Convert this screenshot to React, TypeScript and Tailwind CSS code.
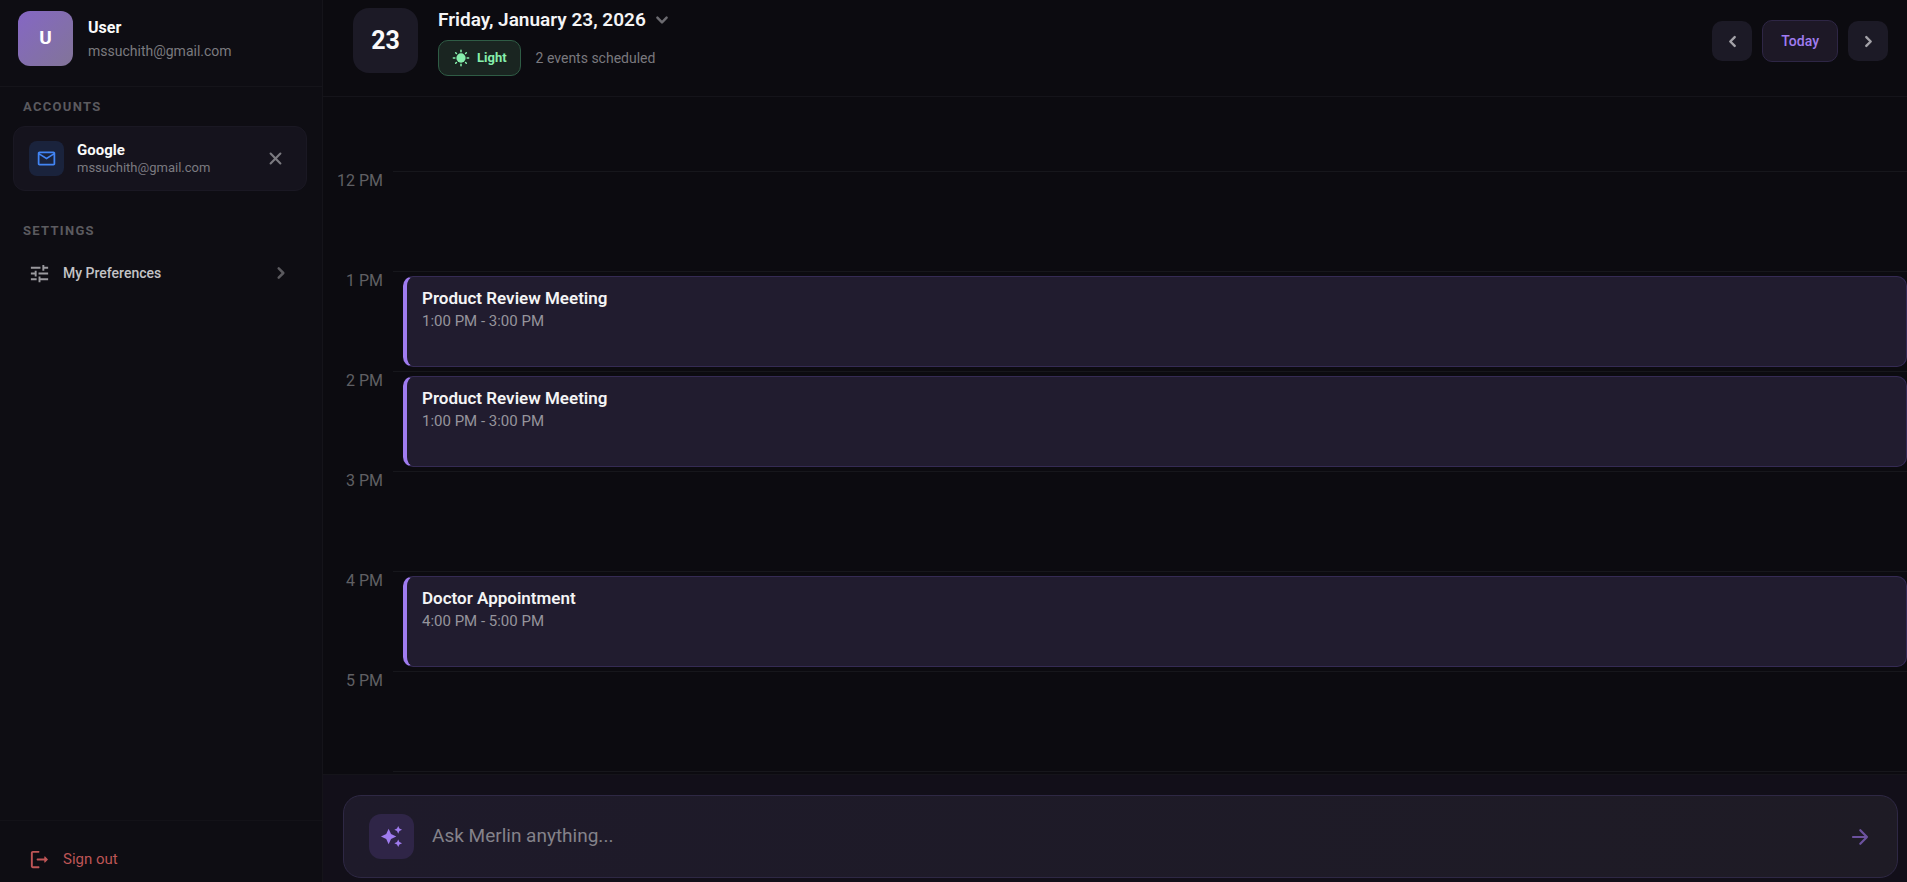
import React from 'react';
import { MdAutoAwesome, MdOutlineMail, MdTune } from 'react-icons/md';

interface CalendarEvent {
  title: string;
  time: string;
}

interface HourSlot {
  hour: number;
  label?: string;
  event?: CalendarEvent;
}

const review: CalendarEvent = { title: 'Product Review Meeting', time: '1:00 PM - 3:00 PM' };

const slots: HourSlot[] = [
  { hour: 12, label: '12 PM' },
  { hour: 13, label: '1 PM', event: review },
  { hour: 14, label: '2 PM', event: review },
  { hour: 15, label: '3 PM' },
  { hour: 16, label: '4 PM', event: { title: 'Doctor Appointment', time: '4:00 PM - 5:00 PM' } },
  { hour: 17, label: '5 PM' },
  { hour: 18 },
];

const ChevronIcon: React.FC<{ className?: string }> = ({ className }) => (
  <svg viewBox="0 0 24 24" fill="none" stroke="currentColor" strokeWidth="2.5" strokeLinecap="round" strokeLinejoin="round" className={className} aria-hidden="true">
    <path d="M9.7 7.4L14.3 12 9.7 16.6" />
  </svg>
);

const CloseIcon: React.FC<{ className?: string }> = ({ className }) => (
  <svg viewBox="0 0 24 24" fill="none" stroke="currentColor" strokeWidth="2.4" strokeLinecap="round" className={className} aria-hidden="true">
    <path d="M6.4 6.4L17.6 17.6M17.6 6.4L6.4 17.6" />
  </svg>
);

const ArrowIcon: React.FC<{ className?: string }> = ({ className }) => (
  <svg viewBox="0 0 24 24" fill="none" stroke="currentColor" strokeWidth="2.2" strokeLinecap="round" strokeLinejoin="round" className={className} aria-hidden="true">
    <path d="M5 12h14M12.3 5.2L19 12l-6.7 6.8" />
  </svg>
);

const SunIcon: React.FC<{ className?: string }> = ({ className }) => (
  <svg viewBox="0 0 24 24" stroke="currentColor" strokeWidth="2" strokeLinecap="round" className={className} aria-hidden="true">
    <circle cx="12" cy="12" r="6.2" fill="currentColor" stroke="none" />
    <path d="M12 1.8v2M12 20.2v2M1.8 12h2M20.2 12h2M4.9 4.9l1 1M18.1 18.1l1 1M19.1 4.9l-1 1M5.9 18.1l-1 1" />
  </svg>
);

const LogoutIcon: React.FC<{ className?: string }> = ({ className }) => (
  <svg viewBox="0 0 24 24" fill="currentColor" className={className} aria-hidden="true">
    <path d="M5 5h6c.55 0 1-.45 1-1s-.45-1-1-1H5c-1.1 0-2 .9-2 2v14c0 1.1.9 2 2 2h6c.55 0 1-.45 1-1s-.45-1-1-1H5V5z" />
    <path d="M20.65 11.65l-2.79-2.79a.501.501 0 0 0-.86.35V11h-7c-.55 0-1 .45-1 1s.45 1 1 1h7v1.79c0 .45.54.67.85.35l2.79-2.79c.2-.19.2-.51.01-.7z" />
  </svg>
);

const Sidebar: React.FC = () => (
  <aside className="flex w-[323px] shrink-0 flex-col border-r border-[#15141a] bg-[#0e0d13]">
    <div className="flex h-[87px] items-start gap-[15px] border-b border-[#15141a] px-[18px] pt-[11px]">
      <div className="flex size-[55px] items-center justify-center rounded-xl bg-linear-to-br from-[#8566c4] to-[#827498] text-[19px] font-bold text-white">
        U
      </div>
      <div className="pt-[5px]">
        <p className="text-base leading-6 font-bold text-[#fafafa]">User</p>
        <p className="text-sm leading-[22px] text-[#7b7a7f]">mssuchith@gmail.com</p>
      </div>
    </div>

    <section className="pt-[10px] pr-[15px] pl-[13px]">
      <h2 className="px-[10px] text-[13px] leading-5 font-bold tracking-widest text-[#5b5a5f]">ACCOUNTS</h2>
      <div className="mt-[9px] flex h-[65px] items-center rounded-xl border border-[#1a1823] bg-[#15131d] px-[15px]">
        <div className="flex size-[35px] items-center justify-center rounded-lg bg-[#1a233c] text-[#4285f4]">
          <MdOutlineMail className="size-[21px]" />
        </div>
        <div className="ml-[13px] flex-1 pb-0.5">
          <p className="text-[15px] leading-5 font-bold text-[#fafafa]">Google</p>
          <p className="text-[13px] leading-4 text-[#7b7a80]">mssuchith@gmail.com</p>
        </div>
        <button aria-label="Remove account" className="mr-[5px] text-[#7b7a80]">
          <CloseIcon className="size-[21px]" />
        </button>
      </div>
    </section>

    <section className="pt-[30px] pr-[14px] pl-[13px]">
      <h2 className="px-[10px] text-[13px] leading-5 font-bold tracking-widest text-[#5b5a5f]">SETTINGS</h2>
      <button className="mt-[7px] flex h-[50px] w-full items-center px-[15px]">
        <MdTune className="size-[23px] text-[#9a999e]" />
        <span className="ml-3 flex-1 text-left text-sm font-medium text-[#c3c3c6]">My Preferences</span>
        <ChevronIcon className="size-6 text-[#5b5a5f]" />
      </button>
    </section>

    <div className="mt-auto h-[62px] border-t border-[#131218] pt-[13px] pr-[14px] pl-[13px]">
      <button className="flex h-[50px] w-full items-center px-[15px] text-[#be5556]">
        <LogoutIcon className="size-[23px]" />
        <span className="ml-3 text-[15px]">Sign out</span>
      </button>
    </div>
  </aside>
);

const DayHeader: React.FC = () => (
  <header className="flex h-[97px] shrink-0 items-start border-b border-[#15141a] pt-2 pr-[19px] pl-[30px]">
    <div className="flex size-[65px] items-center justify-center rounded-2xl bg-[#1c1a26] text-[25px] font-bold text-[#fafafa]">
      23
    </div>
    <div className="ml-5">
      <button className="flex h-6 items-center gap-1">
        <span className="text-[19px] font-semibold text-[#f4f4f5]">Friday, January 23, 2026</span>
        <ChevronIcon className="size-6 rotate-90 text-[#6c6b70]" />
      </button>
      <div className="mt-2 flex items-center gap-[15px]">
        <span className="flex h-9 items-center gap-[7px] rounded-[10px] border border-[#2f5c45] bg-[#1a2521] px-[13px] text-[13px] font-bold text-[#86efac]">
          <SunIcon className="size-[18px]" />
          Light
        </span>
        <span className="text-sm text-[#7a797e]">2 events scheduled</span>
      </div>
    </div>
    <nav className="mt-3 ml-auto flex items-center gap-[10px]">
      <button aria-label="Previous day" className="flex size-10 items-center justify-center rounded-[10px] bg-[#1c1a26] text-[#a3a2a8]">
        <ChevronIcon className="size-[23px] rotate-180" />
      </button>
      <button className="h-[42px] rounded-[10px] border border-[#2e2645] bg-[#1d1826] px-[18px] text-sm font-medium text-[#a07cf0]">
        Today
      </button>
      <button aria-label="Next day" className="flex size-10 items-center justify-center rounded-[10px] bg-[#1c1a26] text-[#a3a2a8]">
        <ChevronIcon className="size-[23px]" />
      </button>
    </nav>
  </header>
);

const HourRow: React.FC<{ slot: HourSlot }> = ({ slot }) => (
  <div className="flex h-[100px] shrink-0">
    <div className="w-[70px] pr-[10px] text-right text-base leading-5 text-[#606064]">{slot.label}</div>
    <div className="flex-1 border-t border-[#17171c] pt-1 pl-[10px]">
      {slot.event && (
        <article className="h-[91px] rounded-[10px] border border-l-4 border-[#352b54] border-l-[#a07cf0] bg-[#211c2f] pt-[10px] pl-[15px]">
          <h3 className="text-[17px] leading-[23px] font-semibold text-[#f4f4f5]">{slot.event.title}</h3>
          <p className="text-[15px] leading-[22px] text-[#96949c]">{slot.event.time}</p>
        </article>
      )}
    </div>
  </div>
);

const PromptBar: React.FC = () => (
  <footer className="h-[108px] shrink-0 border-t border-[#15141a] bg-[#120f19] pt-5 pr-[9px] pl-5">
    <form className="flex h-[83px] items-center rounded-[18px] border border-[#2e2844] bg-linear-to-r from-[#1e1a2a] to-[#1e1b25] px-[25px]">
      <div className="flex size-[45px] items-center justify-center rounded-xl bg-[#2f2547] text-[#a07cf0]">
        <MdAutoAwesome className="size-[23px]" />
      </div>
      <input
        type="text"
        aria-label="Ask Merlin"
        placeholder="Ask Merlin anything..."
        className="ml-[18px] min-w-0 flex-1 bg-transparent text-[19px] text-white outline-none placeholder:text-[#84828a]"
      />
      <button type="button" aria-label="Send" className="text-[#6c529f]">
        <ArrowIcon className="size-6" />
      </button>
    </form>
  </footer>
);

export default function App() {
  return (
    <div className="flex h-screen overflow-hidden bg-[#0c0b10] font-['Roboto',sans-serif]">
      <Sidebar />
      <main className="flex min-w-0 flex-1 flex-col">
        <DayHeader />
        <div className="flex min-h-0 flex-1 flex-col overflow-hidden pt-[74px]">
          {slots.map((slot) => (
            <HourRow key={slot.hour} slot={slot} />
          ))}
        </div>
        <PromptBar />
      </main>
    </div>
  );
}
